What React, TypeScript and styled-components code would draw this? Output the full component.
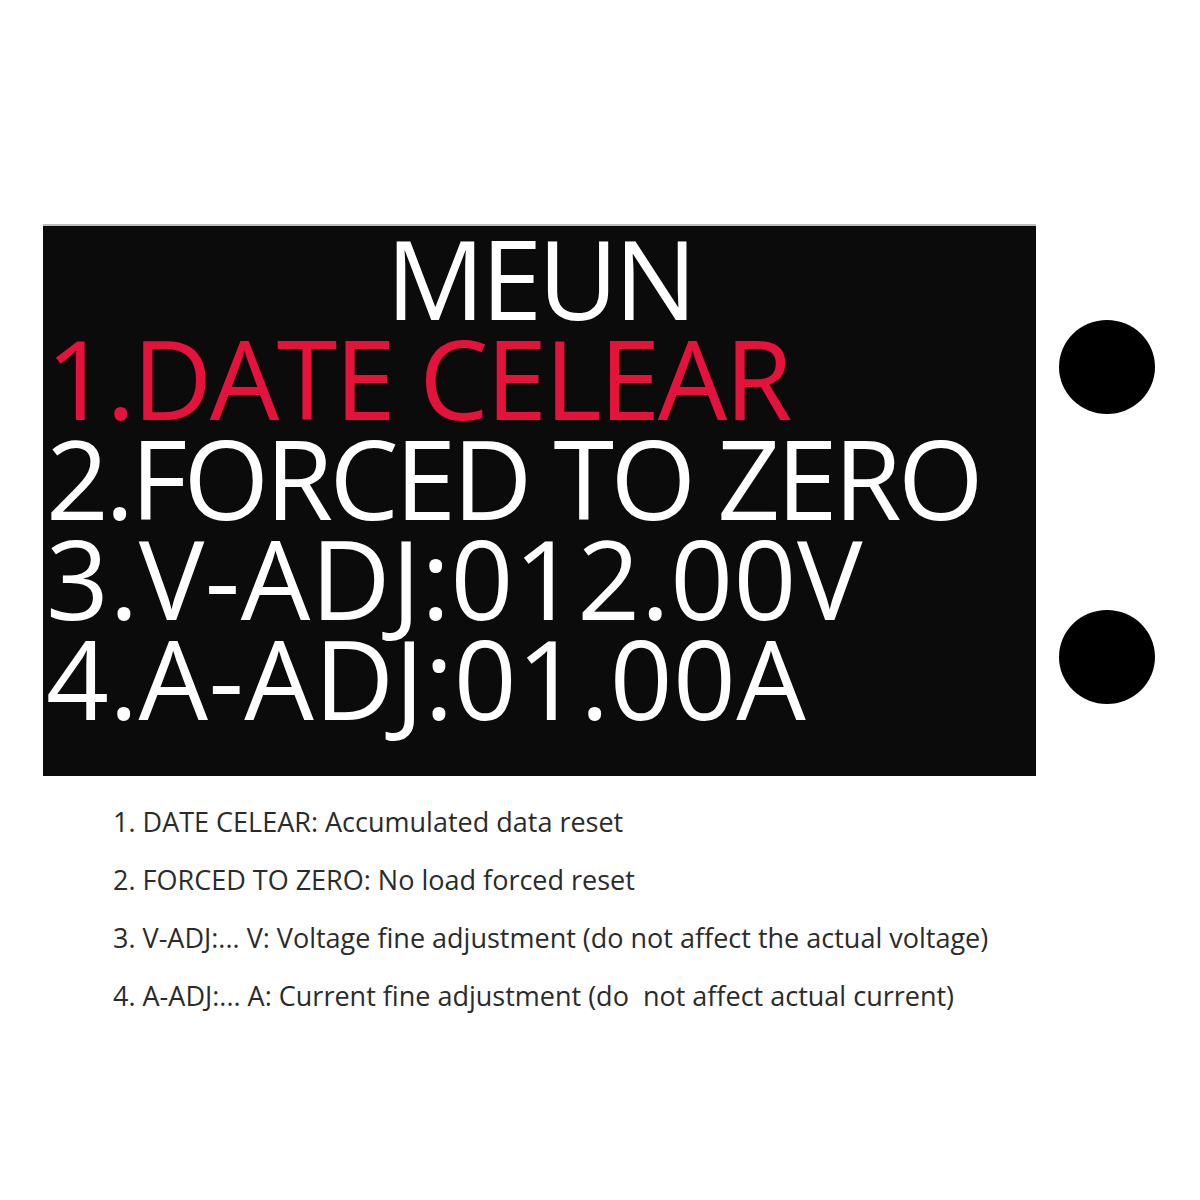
import styled, { createGlobalStyle } from 'styled-components'

const GlobalStyle = createGlobalStyle`
  body {
    margin: 0;
    background: #fff;
    font-family: 'Open Sans', 'Noto Sans', sans-serif;
  }
`

const Page = styled.div`
  width: 1200px;
  height: 1200px;
  display: flex;
  flex-direction: column;
`

const Panel = styled.div`
  display: flex;
  margin: 224px 0 0 43px;
  gap: 23px;
`

const Screen = styled.div`
  width: 993px;
  height: 552px;
  box-sizing: border-box;
  background-color: #0b0b0b;
  border-top: 2px solid #bdbdbd;
  display: flex;
  flex-direction: column;
`

const Title = styled.div`
  color: #fff;
  font-size: 110px;
  line-height: 100px;
  text-align: center;
  letter-spacing: -4px;
  margin-top: 1px;
`

const MenuLine = styled.div<{ $active?: boolean; $tracking: number }>`
  color: ${p => (p.$active ? '#e5133b' : '#fff')};
  font-size: 110px;
  line-height: 100px;
  letter-spacing: ${p => p.$tracking}px;
  padding-left: 3px;
  white-space: nowrap;
`

const Buttons = styled.div`
  display: flex;
  flex-direction: column;
  padding-top: 96px;
  gap: 196px;
`

const Knob = styled.div`
  width: 96px;
  height: 94px;
  border-radius: 50%;
  background: #000;
`

const Notes = styled.ol`
  list-style: none;
  margin: 28px 0 0 113px;
  padding: 0;
  display: flex;
  flex-direction: column;
  gap: 22px;
`

const Note = styled.li`
  font-size: 27px;
  line-height: 36px;
  color: #2b2b2b;
  white-space: pre;
`

const menu = [
  { text: '1.DATE CELEAR', tracking: -2.6, active: true },
  { text: '2.FORCED TO ZERO', tracking: -3.7 },
  { text: '3.V-ADJ:012.00V', tracking: 0.5 },
  { text: '4.A-ADJ:01.00A', tracking: 0.4 },
]

const notes = [
  '1. DATE CELEAR: Accumulated data reset',
  '2. FORCED TO ZERO: No load forced reset',
  '3. V-ADJ:... V: Voltage fine adjustment (do not affect the actual voltage)',
  '4. A-ADJ:... A: Current fine adjustment (do  not affect actual current)',
]

export default function App() {
  return (
    <Page>
      <GlobalStyle />
      <Panel>
        <Screen>
          <Title>MEUN</Title>
          {menu.map(row => (
            <MenuLine key={row.text} $active={row.active} $tracking={row.tracking}>
              {row.text}
            </MenuLine>
          ))}
        </Screen>
        <Buttons>
          <Knob />
          <Knob />
        </Buttons>
      </Panel>
      <Notes>
        {notes.map(n => (
          <Note key={n}>{n}</Note>
        ))}
      </Notes>
    </Page>
  )
}
